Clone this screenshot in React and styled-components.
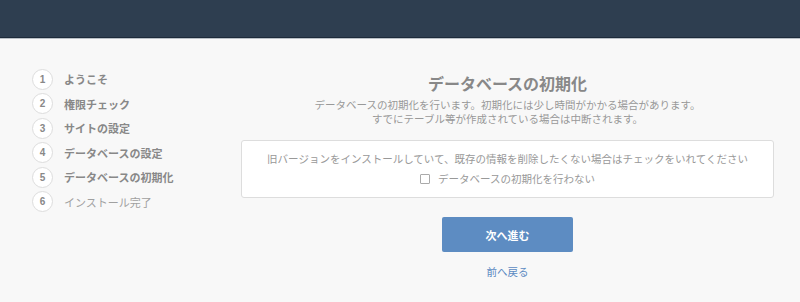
import React from "react";
import styled, { createGlobalStyle } from "styled-components";

const GlobalStyle = createGlobalStyle`
  html, body {
    margin: 0;
    padding: 0;
    background: #f8f8f8;
    font-family: "Noto Sans CJK JP", "Noto Sans", sans-serif;
  }
`;

const Header = styled.div`
  height: 37px;
  background: #2e3e50;
  border-bottom: 1px solid #1d2a3a;
  box-shadow: 0 1px 0 #b9c0c6;
`;

const Layout = styled.div`
  display: flex;
  padding: 31px 26px 0 32px;
`;

const Sidebar = styled.ol`
  list-style: none;
  margin: 0;
  padding: 0;
  width: 209px;
  flex-shrink: 0;
  display: flex;
  flex-direction: column;
  gap: 4px;
`;

const Step = styled.li`
  display: flex;
  align-items: center;
  gap: 11px;
  height: 20.5px;
  font-size: 11px;
  font-weight: ${p => (p.done ? "bold" : "normal")};
  color: ${p => (p.done ? "#888" : "#a0a0a0")};
`;

const StepNum = styled.span`
  width: 19px;
  height: 19px;
  border: 1px solid #ddd;
  border-radius: 50%;
  background: #fff;
  display: flex;
  align-items: center;
  justify-content: center;
  font-family: "Liberation Sans", sans-serif;
  font-size: 10px;
  font-weight: bold;
  color: #888;
`;

const Main = styled.div`
  flex: 1;
  display: flex;
  flex-direction: column;
  align-items: center;
  text-align: center;
  padding-top: 3px;
`;

const Title = styled.h2`
  margin: 0;
  font-size: 16px;
  font-weight: bold;
  color: #888;
  line-height: 22px;
`;

const Lead = styled.p`
  margin: 4px 0 0;
  font-size: 10.5px;
  line-height: 13.5px;
  color: #999;
`;

const Box = styled.div`
  align-self: stretch;
  margin-top: 15px;
  background: #fff;
  border: 1px solid #ddd;
  border-radius: 3px;
  padding: 9px 0 8px;
  font-size: 10.5px;
  color: #999;
  line-height: 18px;
`;

const CheckRow = styled.label`
  display: inline-flex;
  align-items: center;
  gap: 8px;
  margin-top: 2px;
`;

const Check = styled.span`
  width: 8px;
  height: 8px;
  border: 1px solid #aaa;
  border-radius: 1px;
  background: #fff;
`;

const Button = styled.button`
  margin-top: 19px;
  width: 131px;
  height: 35px;
  border: none;
  border-radius: 2px;
  background: #5d8cc2;
  color: #fff;
  font-family: inherit;
  font-size: 11px;
  font-weight: bold;
`;

const BackLink = styled.a`
  margin-top: 12px;
  font-size: 10.5px;
  color: #5b8ac2;
  text-decoration: none;
`;

const steps = [
  "ようこそ",
  "権限チェック",
  "サイトの設定",
  "データベースの設定",
  "データベースの初期化",
  "インストール完了",
];

export default function App() {
  return (
    <>
      <GlobalStyle />
      <Header />
      <Layout>
        <Sidebar>
          {steps.map((s, i) => (
            <Step key={s} done={i < 5}>
              <StepNum>{i + 1}</StepNum>
              {s}
            </Step>
          ))}
        </Sidebar>
        <Main>
          <Title>データベースの初期化</Title>
          <Lead>
            データベースの初期化を行います。初期化には少し時間がかかる場合があります。
            <br />
            すでにテーブル等が作成されている場合は中断されます。
          </Lead>
          <Box>
            旧バージョンをインストールしていて、既存の情報を削除したくない場合はチェックをいれてください
            <br />
            <CheckRow>
              <Check />
              データベースの初期化を行わない
            </CheckRow>
          </Box>
          <Button>次へ進む</Button>
          <BackLink href="#">前へ戻る</BackLink>
        </Main>
      </Layout>
    </>
  );
}
